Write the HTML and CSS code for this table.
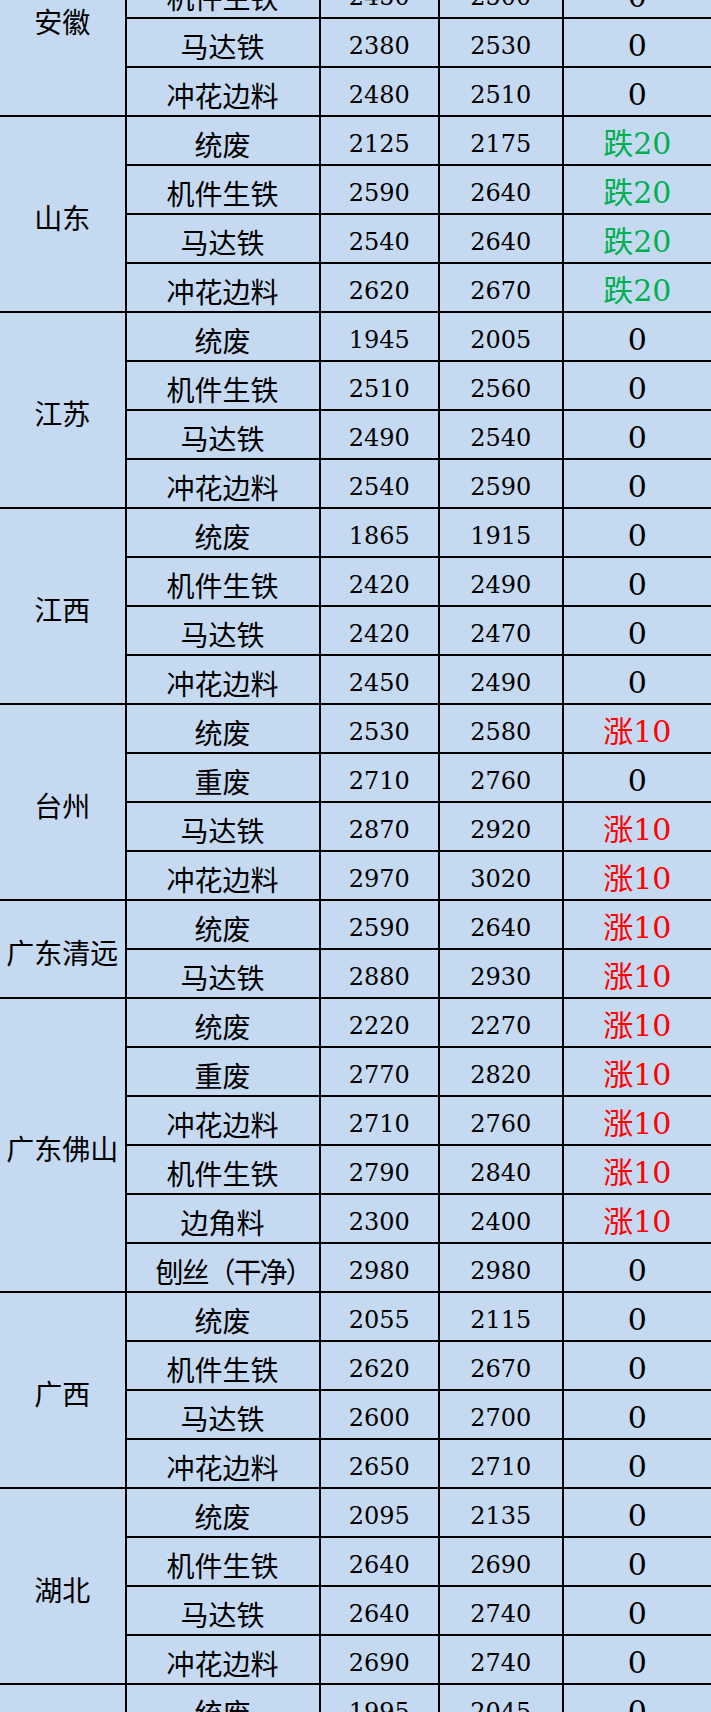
FILE: index.html
```html
<!DOCTYPE html>
<html lang="zh-CN">
<head>
<meta charset="utf-8">
<title>废钢价格表</title>
<link rel="stylesheet" href="styles.css">
</head>
<body>
<div class="viewport">
  <div class="sheet">
    <div class="c region s4">安徽</div>
    <div class="c type">统废</div><div class="c num"></div><div class="c num"></div><div class="c chg"></div>
    <div class="c type">机件生铁</div><div class="c num">2450</div><div class="c num">2500</div><div class="c chg">0</div>
    <div class="c type">马达铁</div><div class="c num">2380</div><div class="c num">2530</div><div class="c chg">0</div>
    <div class="c type">冲花边料</div><div class="c num">2480</div><div class="c num">2510</div><div class="c chg">0</div>

    <div class="c region s4">山东</div>
    <div class="c type">统废</div><div class="c num">2125</div><div class="c num">2175</div><div class="c chg down">跌20</div>
    <div class="c type">机件生铁</div><div class="c num">2590</div><div class="c num">2640</div><div class="c chg down">跌20</div>
    <div class="c type">马达铁</div><div class="c num">2540</div><div class="c num">2640</div><div class="c chg down">跌20</div>
    <div class="c type">冲花边料</div><div class="c num">2620</div><div class="c num">2670</div><div class="c chg down">跌20</div>

    <div class="c region s4">江苏</div>
    <div class="c type">统废</div><div class="c num">1945</div><div class="c num">2005</div><div class="c chg">0</div>
    <div class="c type">机件生铁</div><div class="c num">2510</div><div class="c num">2560</div><div class="c chg">0</div>
    <div class="c type">马达铁</div><div class="c num">2490</div><div class="c num">2540</div><div class="c chg">0</div>
    <div class="c type">冲花边料</div><div class="c num">2540</div><div class="c num">2590</div><div class="c chg">0</div>

    <div class="c region s4">江西</div>
    <div class="c type">统废</div><div class="c num">1865</div><div class="c num">1915</div><div class="c chg">0</div>
    <div class="c type">机件生铁</div><div class="c num">2420</div><div class="c num">2490</div><div class="c chg">0</div>
    <div class="c type">马达铁</div><div class="c num">2420</div><div class="c num">2470</div><div class="c chg">0</div>
    <div class="c type">冲花边料</div><div class="c num">2450</div><div class="c num">2490</div><div class="c chg">0</div>

    <div class="c region s4">台州</div>
    <div class="c type">统废</div><div class="c num">2530</div><div class="c num">2580</div><div class="c chg up">涨10</div>
    <div class="c type">重废</div><div class="c num">2710</div><div class="c num">2760</div><div class="c chg">0</div>
    <div class="c type">马达铁</div><div class="c num">2870</div><div class="c num">2920</div><div class="c chg up">涨10</div>
    <div class="c type">冲花边料</div><div class="c num">2970</div><div class="c num">3020</div><div class="c chg up">涨10</div>

    <div class="c region s2">广东清远</div>
    <div class="c type">统废</div><div class="c num">2590</div><div class="c num">2640</div><div class="c chg up">涨10</div>
    <div class="c type">马达铁</div><div class="c num">2880</div><div class="c num">2930</div><div class="c chg up">涨10</div>

    <div class="c region s6">广东佛山</div>
    <div class="c type">统废</div><div class="c num">2220</div><div class="c num">2270</div><div class="c chg up">涨10</div>
    <div class="c type">重废</div><div class="c num">2770</div><div class="c num">2820</div><div class="c chg up">涨10</div>
    <div class="c type">冲花边料</div><div class="c num">2710</div><div class="c num">2760</div><div class="c chg up">涨10</div>
    <div class="c type">机件生铁</div><div class="c num">2790</div><div class="c num">2840</div><div class="c chg up">涨10</div>
    <div class="c type">边角料</div><div class="c num">2300</div><div class="c num">2400</div><div class="c chg up">涨10</div>
    <div class="c type tight">刨丝（干净）</div><div class="c num">2980</div><div class="c num">2980</div><div class="c chg">0</div>

    <div class="c region s4">广西</div>
    <div class="c type">统废</div><div class="c num">2055</div><div class="c num">2115</div><div class="c chg">0</div>
    <div class="c type">机件生铁</div><div class="c num">2620</div><div class="c num">2670</div><div class="c chg">0</div>
    <div class="c type">马达铁</div><div class="c num">2600</div><div class="c num">2700</div><div class="c chg">0</div>
    <div class="c type">冲花边料</div><div class="c num">2650</div><div class="c num">2710</div><div class="c chg">0</div>

    <div class="c region s4">湖北</div>
    <div class="c type">统废</div><div class="c num">2095</div><div class="c num">2135</div><div class="c chg">0</div>
    <div class="c type">机件生铁</div><div class="c num">2640</div><div class="c num">2690</div><div class="c chg">0</div>
    <div class="c type">马达铁</div><div class="c num">2640</div><div class="c num">2740</div><div class="c chg">0</div>
    <div class="c type">冲花边料</div><div class="c num">2690</div><div class="c num">2740</div><div class="c chg">0</div>

    <div class="c region"></div>
    <div class="c type">统废</div><div class="c num">1995</div><div class="c num">2045</div><div class="c chg">0</div>
  </div>
</div>
</body>
</html>
```

FILE: styles.css
```css
html, body {
  margin: 0;
  padding: 0;
  background: #C5D9F1;
}

.viewport {
  width: 711px;
  height: 1712px;
  overflow: hidden;
}

.sheet {
  display: grid;
  grid-template-columns: 124.5px 192px 117.5px 121.5px 147.5px;
  grid-auto-rows: 47px;
  gap: 2px;
  background: #000;
  margin-top: -79px;
}

.c {
  background: #C5D9F1;
  color: #000;
  display: flex;
  align-items: center;
  justify-content: center;
  line-height: 1;
  white-space: nowrap;
  padding-top: 6px;
  box-sizing: border-box;
}

.s2 { grid-row: span 2; }
.s4 { grid-row: span 4; }
.s6 { grid-row: span 6; }

.region,
.type {
  font-family: "Noto Sans CJK SC", sans-serif;
  font-size: 28px;
}

.tight {
  letter-spacing: -2px;
  padding-left: 22px;
}

.num {
  font-family: "DejaVu Serif", serif;
  font-size: 24px;
}

.chg {
  font-family: "DejaVu Serif", "Noto Sans CJK SC", serif;
  font-size: 30px;
}

.chg.down { color: #00B050; }
.chg.up { color: #FF0000; }
```
